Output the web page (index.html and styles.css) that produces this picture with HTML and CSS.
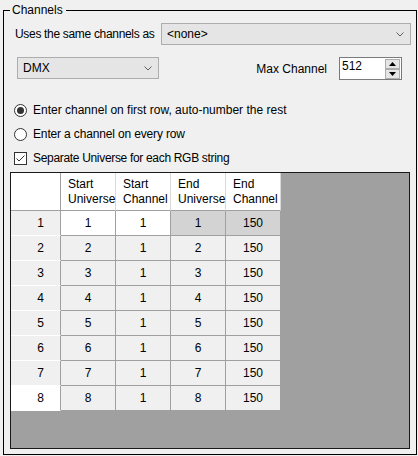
FILE: index.html
```html
<!DOCTYPE html>
<html>
<head>
<meta charset="utf-8">
<link rel="stylesheet" href="styles.css">
</head>
<body>
<fieldset class="group">
  <legend class="group-title">Channels</legend>
  <div class="group-body">
    <div class="row row-same">
      <span class="label tight">Uses the same channels as</span>
      <div class="combo combo-wide">
        <span class="combo-text">&lt;none&gt;</span>
        <svg class="chev" width="8" height="5" viewBox="0 0 8 5"><polyline points="0.5,0.5 4,4 7.5,0.5" fill="none" stroke="#606060" stroke-width="1"/></svg>
      </div>
    </div>
    <div class="row row-type">
      <div class="combo combo-type">
        <span class="combo-text">DMX</span>
        <svg class="chev" width="8" height="5" viewBox="0 0 8 5"><polyline points="0.5,0.5 4,4 7.5,0.5" fill="none" stroke="#606060" stroke-width="1"/></svg>
      </div>
      <span class="label max-label">Max Channel</span>
      <div class="numeric">
        <span class="numeric-text">512</span>
        <div class="spin">
          <span class="spin-btn"><svg width="7" height="4" viewBox="0 0 7 4"><polygon points="3.5,0 7,4 0,4" fill="#000"/></svg></span>
          <span class="spin-btn"><svg width="7" height="4" viewBox="0 0 7 4"><polygon points="0,0 7,0 3.5,4" fill="#000"/></svg></span>
        </div>
      </div>
    </div>
    <div class="options">
      <div class="option"><span class="radio radio-on"></span><span>Enter channel on first row, auto-number the rest</span></div>
      <div class="option"><span class="radio"></span><span class="tight-s">Enter a channel on every row</span></div>
      <div class="option"><span class="check"><svg width="11" height="11" viewBox="0 0 11 11"><polyline points="1.5,5.5 4,8 9.5,2.5" fill="none" stroke="#333" stroke-width="1"/></svg></span><span class="tight">Separate Universe for each RGB string</span></div>
    </div>
    <div class="grid">
      <div class="table">
        <div class="cell corner"></div>
        <div class="cell head">Start<br>Universe</div>
        <div class="cell head">Start<br>Channel</div>
        <div class="cell head">End<br>Universe</div>
        <div class="cell head">End<br>Channel</div>

        <div class="cell rowhead">1</div>
        <div class="cell data white">1</div>
        <div class="cell data white">1</div>
        <div class="cell data sel">1</div>
        <div class="cell data sel">150</div>

        <div class="cell rowhead">2</div>
        <div class="cell data">2</div>
        <div class="cell data">1</div>
        <div class="cell data">2</div>
        <div class="cell data">150</div>

        <div class="cell rowhead">3</div>
        <div class="cell data">3</div>
        <div class="cell data">1</div>
        <div class="cell data">3</div>
        <div class="cell data">150</div>

        <div class="cell rowhead">4</div>
        <div class="cell data">4</div>
        <div class="cell data">1</div>
        <div class="cell data">4</div>
        <div class="cell data">150</div>

        <div class="cell rowhead">5</div>
        <div class="cell data">5</div>
        <div class="cell data">1</div>
        <div class="cell data">5</div>
        <div class="cell data">150</div>

        <div class="cell rowhead">6</div>
        <div class="cell data">6</div>
        <div class="cell data">1</div>
        <div class="cell data">6</div>
        <div class="cell data">150</div>

        <div class="cell rowhead">7</div>
        <div class="cell data">7</div>
        <div class="cell data">1</div>
        <div class="cell data">7</div>
        <div class="cell data">150</div>

        <div class="cell rowhead rowhead-hot">8</div>
        <div class="cell data">8</div>
        <div class="cell data">1</div>
        <div class="cell data">8</div>
        <div class="cell data">150</div>
      </div>
    </div>
  </div>
</fieldset>
</body>
</html>
```

FILE: styles.css
```css
html, body {
  margin: 0;
  padding: 0;
  background: #f0f0f0;
}
body {
  font-family: "Liberation Sans", Arial, sans-serif;
  font-size: 12px;
  color: #000;
  width: 418px;
  height: 456px;
  overflow: hidden;
}
.group {
  margin: 0 0 0 3px;
  padding: 0;
  width: 414px;
  height: 455px;
  box-sizing: border-box;
  border: 1px solid #000;
  min-width: 0;
}
.group-title {
  margin-left: 6px;
  padding: 0 3px 0 2px;
  line-height: 20px;
  font-size: 12px;
}
.group-body {
  display: flex;
  flex-direction: column;
  padding: 3px 6px 0 6px;
}
.row {
  display: flex;
  align-items: center;
}
.label {
  white-space: nowrap;
}
.tight {
  letter-spacing: -0.32px;
}
.tight-s {
  letter-spacing: -0.15px;
}
.row-same {
  height: 22px;
  padding-left: 5px;
}
.combo {
  box-sizing: border-box;
  height: 22px;
  background: #e5e5e5;
  border: 1px solid #adadad;
  display: flex;
  align-items: center;
  justify-content: space-between;
  flex-shrink: 0;
}
.combo-wide {
  width: 250px;
  margin-left: auto;
  margin-right: -1px;
  padding: 0 6px 0 5px;
}
.combo-wide .combo-text {
  margin-top: -1px;
}
.row-type {
  margin-top: 12px;
  height: 23px;
  padding-left: 7px;
  padding-right: 8px;
}
.combo-type {
  width: 142px;
  padding: 0 6px 0 5px;
  align-self: flex-start;
}
.max-label {
  margin-left: auto;
}
.numeric {
  box-sizing: border-box;
  margin-left: 12px;
  width: 63px;
  height: 23px;
  background: #fff;
  border: 1px solid #7a7a7a;
  display: flex;
  align-items: center;
  justify-content: space-between;
  padding: 1px 1px 1px 2px;
  flex-shrink: 0;
}
.numeric-text {
  align-self: flex-start;
  line-height: 15px;
}
.spin {
  display: flex;
  flex-direction: column;
  width: 15px;
}
.spin-btn {
  box-sizing: border-box;
  height: 10px;
  background: #e5e5e5;
  border: 1px solid #adadad;
  display: flex;
  align-items: center;
  justify-content: center;
}
.options {
  margin-top: 18px;
  display: flex;
  flex-direction: column;
}
.option {
  height: 24px;
  display: flex;
  align-items: center;
  padding-left: 4px;
  white-space: nowrap;
}
.radio {
  box-sizing: border-box;
  width: 13px;
  height: 13px;
  border: 1px solid #333;
  border-radius: 50%;
  background: #fff;
  margin-right: 6px;
  display: flex;
  align-items: center;
  justify-content: center;
}
.radio-on::after {
  content: "";
  width: 7px;
  height: 7px;
  border-radius: 50%;
  background: #333;
}
.check {
  box-sizing: border-box;
  width: 13px;
  height: 13px;
  border: 1px solid #333;
  background: #fff;
  margin-right: 6px;
  display: flex;
  align-items: center;
  justify-content: center;
}
.grid {
  margin-top: 2px;
  box-sizing: border-box;
  height: 277px;
  border: 1px solid #1a1a1a;
  background: #a0a0a0;
}
.table {
  display: grid;
  grid-template-columns: 50px repeat(4, 55px);
  grid-template-rows: 38px repeat(8, 25px);
}
.cell {
  box-sizing: border-box;
  border-right: 1px solid #a0a0a0;
  border-bottom: 1px solid #a0a0a0;
  display: flex;
  align-items: center;
  justify-content: center;
}
.corner {
  background: #fff;
}
.head {
  background: #fff;
  justify-content: flex-start;
  padding-left: 7px;
  line-height: 15px;
  border-right-color: #d9d9d9;
}
.head:last-child {
  border-right-color: #a0a0a0;
}
.rowhead {
  background: #f0f0f0;
  justify-content: flex-end;
  padding-right: 16px;
  border-bottom-color: #fff;
}
.rowhead-hot {
  background: #fff;
}
.data {
  background: #f0f0f0;
}
.data.white {
  background: #fff;
}
.data.sel {
  background: #d3d3d3;
}
```
